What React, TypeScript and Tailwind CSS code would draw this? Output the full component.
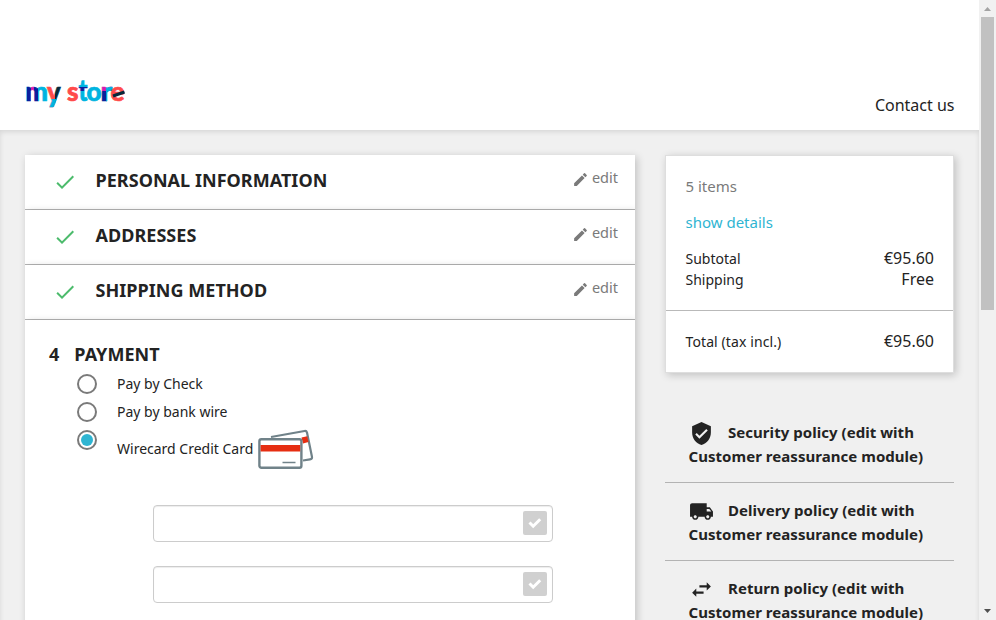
import React from "react";

function StoreLogo() {
  const letter = {
    fontFamily: "Lato, sans-serif",
    fontWeight: 900,
    fontSize: 27,
    strokeWidth: 0.7,
    lengthAdjust: "spacingAndGlyphs" as const,
  };
  return (
    <svg className="overflow-visible" width="102" height="46" viewBox="0 0 102 46" role="img" aria-label="my store">
      <defs>
        <linearGradient id="m" gradientUnits="userSpaceOnUse" x1="0" y1="0" x2="22" y2="0">
          <stop offset="0.1" stopColor="#00b4e0" />
          <stop offset="0.1" stopColor="#0a1f9c" />
          <stop offset="0.27" stopColor="#0a1f9c" />
          <stop offset="0.27" stopColor="#d41cb0" />
          <stop offset="0.42" stopColor="#d41cb0" />
          <stop offset="0.42" stopColor="#0a1f9c" />
          <stop offset="0.6" stopColor="#0a1f9c" />
          <stop offset="0.6" stopColor="#00b4e0" />
        </linearGradient>
        <linearGradient id="y" gradientUnits="userSpaceOnUse" x1="22" y1="0" x2="36" y2="0">
          <stop offset="0.58" stopColor="#ff4b4b" />
          <stop offset="0.58" stopColor="#06283a" />
        </linearGradient>
        <linearGradient id="yTail" gradientUnits="userSpaceOnUse" x1="0" y1="20" x2="0" y2="44">
          <stop offset="0.56" stopColor="#00b4e0" stopOpacity="0" />
          <stop offset="0.56" stopColor="#00b4e0" />
        </linearGradient>
        <linearGradient id="t" gradientUnits="userSpaceOnUse" x1="0" y1="14" x2="0" y2="36">
          <stop offset="0.33" stopColor="#00b4e0" />
          <stop offset="0.33" stopColor="#0a1f9c" />
          <stop offset="0.5" stopColor="#0a1f9c" />
          <stop offset="0.5" stopColor="#00b4e0" />
        </linearGradient>
        <linearGradient id="rStem" gradientUnits="userSpaceOnUse" x1="0" y1="20" x2="0" y2="36">
          <stop offset="0.33" stopColor="#d41cb0" />
          <stop offset="0.33" stopColor="#0a1f9c" />
        </linearGradient>
        <linearGradient id="rArm" gradientUnits="userSpaceOnUse" x1="76" y1="0" x2="87" y2="0">
          <stop offset="0.5" stopColor="#00b4e0" stopOpacity="0" />
          <stop offset="0.5" stopColor="#00b4e0" />
        </linearGradient>
      </defs>
      <text {...letter} x="0" y="34.5" textLength="23" fill="url(#m)" stroke="url(#m)">m</text>
      <text {...letter} x="22" y="36" fontSize={29} textLength="13.5" fill="url(#y)" stroke="url(#y)">y</text>
      <text {...letter} x="22" y="36" fontSize={29} textLength="13.5" fill="url(#yTail)" stroke="url(#yTail)" aria-hidden="true">y</text>
      <text {...letter} x="42" y="34.5" textLength="11.5" fill="#ff4b4b" stroke="#ff4b4b">s</text>
      <text {...letter} x="53.5" y="34.5" fontSize={30} textLength="9" fill="url(#t)" stroke="url(#t)">t</text>
      <text {...letter} x="61.5" y="34.5" textLength="15" fill="#00b4e0" stroke="#00b4e0">o</text>
      <text {...letter} x="75.5" y="34.5" textLength="11.5" fill="url(#rStem)" stroke="url(#rStem)">r</text>
      <text {...letter} x="75.5" y="34.5" textLength="11.5" fill="url(#rArm)" stroke="url(#rArm)" aria-hidden="true">r</text>
      <text {...letter} x="85.5" y="34.5" textLength="14" fill="#ff4b4b" stroke="#ff4b4b">e</text>
      <path d="M88 30 L99.5 26" stroke="#06283a" strokeWidth="3.2" />
    </svg>
  );
}

function StepRow({ title }: { title: string }) {
  return (
    <div className="flex h-[55px] border-b border-[#b3b3b3] bg-white pl-[28px] pr-[17px] shadow-[2px_2px_8px_rgba(0,0,0,0.2)]">
      <svg className="mt-[15px]" width="24" height="24" viewBox="0 0 24 24" fill="#4cbb6c">
        <path d="M9 16.17L4.83 12l-1.42 1.41L9 19 21 7l-1.41-1.41z" />
      </svg>
      <h2 className="ml-[18.5px] mt-[12px] text-[18px] leading-[26px] font-bold tracking-[0.04px]">{title}</h2>
      <span className="ml-auto mt-[10px] flex h-[24px] items-center text-[14.5px] leading-[24px] text-[#7a7a7a]">
        <svg className="mr-[3px] mt-[4px]" width="17" height="17" viewBox="0 0 24 24" fill="currentColor">
          <path d="M3 17.25V21h3.75L17.81 9.94l-3.75-3.75L3 17.25zM20.71 7.04a1 1 0 0 0 0-1.41l-2.34-2.34a1 1 0 0 0-1.41 0l-1.83 1.83 3.75 3.75 1.83-1.83z" />
        </svg>
        edit
      </span>
    </div>
  );
}

function Radio({ checked = false }: { checked?: boolean }) {
  return (
    <span className="flex size-5 shrink-0 items-center justify-center rounded-full border-2 border-[#7a7a7a] bg-white">
      {checked && <span className="size-3 rounded-full bg-[#2fb5d2]" />}
    </span>
  );
}

function CreditCards() {
  return (
    <svg className="ml-[5px]" width="56" height="40" viewBox="0 0 56 40" fill="none">
      <path d="M13 8 L46.5 2 Q48.5 1.7 49 3.5 L54 28 Q54.3 30 52 30.4 L45 31.5" stroke="#708289" strokeWidth="2.2" />
      <path d="M43.5 8.6 L49.2 7.2 50.5 13 45 14.5z" fill="#e62e12" />
      <rect x="1.4" y="10.2" width="42" height="28.6" rx="2" fill="white" stroke="#708289" strokeWidth="2.4" />
      <path d="M2.6 16h39.6v6.5H2.6z" fill="#e62e12" />
      <path d="M24.5 33.5h13" stroke="#708289" strokeWidth="1.5" />
    </svg>
  );
}

function CardField() {
  return (
    <div className="flex h-[37px] w-[400px] items-start justify-end rounded-[4px] border border-[#ccc] bg-white pr-[5px] pt-[5px] shadow-[inset_0_1px_1px_rgba(0,0,0,0.075)]">
      <span className="flex size-6 items-center justify-center rounded-[2px] bg-[#d0d0d0]">
        <svg width="14" height="12" viewBox="0 0 14 12" fill="none" stroke="white" strokeWidth="3">
          <path d="M1.5 5.5 L5.2 9.2 L12.2 2.3" />
        </svg>
      </span>
    </div>
  );
}

function Policy({ title, icon, last = false }: { title: string; icon: React.ReactNode; last?: boolean }) {
  return (
    <div className={last ? "h-[78px] pl-[23.5px] pt-[15px]" : "h-[78px] border-b border-[#b3b3b3] pl-[23.5px] pt-[15px]"}>
      <div className="flex h-6 items-center">
        <svg className="mr-[14.5px] mt-[2px] shrink-0" width="25" height="25" viewBox="0 0 24 24" fill="#232323">
          {icon}
        </svg>
        <span className="text-[15px] leading-6 font-bold whitespace-nowrap tracking-[0.04px]">{title} (edit with</span>
      </div>
      <div className="text-[15px] leading-6 font-bold whitespace-nowrap tracking-[0.04px]">Customer reassurance module)</div>
    </div>
  );
}

export default function App() {
  return (
    <div className="flex h-[620px] w-[996px] overflow-hidden bg-white font-['Noto_Sans',sans-serif] text-[#232323]">
      <div className="flex w-[979px] flex-col">
        <header className="flex h-[130px] shrink-0 justify-between pl-[25px] pr-[24.5px]">
          <div className="pt-[66px]">
            <StoreLogo />
          </div>
          <a className="pt-[93px] text-[16px] leading-6">Contact us</a>
        </header>
        <main className="h-[600px] shrink-0 bg-[#f0f0f0] pl-[25px] pt-[25px] shadow-[inset_0_2px_5px_0_rgba(0,0,0,0.11)]">
          <div className="flex items-start gap-[30px]">
            <section className="h-[560px] w-[610px] overflow-hidden bg-white shadow-[2px_2px_8px_0_rgba(0,0,0,0.2)]">
              <StepRow title="PERSONAL INFORMATION" />
              <StepRow title="ADDRESSES" />
              <StepRow title="SHIPPING METHOD" />
              <div className="h-[395px] bg-white pl-6 pt-[21px] shadow-[2px_2px_8px_0_rgba(0,0,0,0.2)]">
                <h2 className="flex gap-[15px] text-[18px] leading-[26px] font-bold tracking-[0.04px]">
                  <span>4</span>
                  <span>PAYMENT</span>
                </h2>
                <div className="flex flex-col pl-7 pt-[7px] text-[14px] leading-5">
                  <label className="flex h-7 items-start gap-5"><Radio />Pay by Check</label>
                  <label className="flex h-7 items-start gap-5"><Radio />Pay by bank wire</label>
                  <label className="flex h-[75px] items-start">
                    <Radio checked />
                    <span className="-mt-px ml-5 flex items-center">Wirecard Credit Card<CreditCards /></span>
                  </label>
                </div>
                <div className="flex flex-col gap-6 pl-[104px]">
                  <CardField />
                  <CardField />
                </div>
              </div>
            </section>
            <aside className="w-[289px]">
              <div className="h-[218px] border border-[#dedede] bg-white shadow-[2px_2px_8px_0_rgba(0,0,0,0.2)]">
                <div className="h-[155px] border-b border-[#b9b9b9] pl-[19.5px] pr-[19px] pt-[18px] text-[15px] leading-6">
                  <p className="text-[#7a7a7a]">5 items</p>
                  <p className="mt-3 text-[#2fb5d2]">show details</p>
                  <div className="mt-[14px] flex h-[21px] items-center justify-between">
                    <span className="text-[14px]">Subtotal</span><span className="-mt-0.5 text-[16px]">€95.60</span>
                  </div>
                  <div className="flex h-[21px] items-center justify-between">
                    <span className="text-[14px]">Shipping</span><span className="-mt-0.5 text-[16px]">Free</span>
                  </div>
                </div>
                <div className="flex h-[61px] items-center justify-between pl-[19.5px] pr-[19px]">
                  <span className="text-[14px] tracking-[0.1px]">Total (tax incl.)</span><span className="-mt-0.5 text-[16px]">€95.60</span>
                </div>
              </div>
              <div className="mt-8">
                <Policy
                  title="Security policy"
                  icon={<path d="M12 1L3 5v6c0 5.55 3.84 10.74 9 12 5.16-1.26 9-6.45 9-12V5l-9-4zm-2 16l-4-4 1.41-1.41L10 14.17l6.59-6.59L18 9l-8 8z" />}
                />
                <Policy
                  title="Delivery policy"
                  icon={<path d="M20 8h-3V4H3c-1.1 0-2 .9-2 2v11h2c0 1.66 1.34 3 3 3s3-1.34 3-3h6c0 1.66 1.34 3 3 3s3-1.34 3-3h2v-5l-3-4zM6 18.5c-.83 0-1.5-.67-1.5-1.5s.67-1.5 1.5-1.5 1.5.67 1.5 1.5-.67 1.5-1.5 1.5zm13.5-9l1.96 2.5H17V9.5h2.5zm-1.5 9c-.83 0-1.5-.67-1.5-1.5s.67-1.5 1.5-1.5 1.5.67 1.5 1.5-.67 1.5-1.5 1.5z" />}
                />
                <Policy
                  last
                  title="Return policy"
                  icon={<path d="M6.99 11L3 15l3.99 4v-3H14v-2H6.99v-3zM21 9l-3.99-4v3H10v2h7.01v3L21 9z" />}
                />
              </div>
            </aside>
          </div>
        </main>
      </div>
      <div className="flex w-[17px] flex-col items-center bg-[#f1f1f1]">
        <svg width="17" height="17" fill="#a3a3a3"><path d="M5 11h7L8.5 7z" /></svg>
        <div className="h-[293px] w-[13px] bg-[#c1c1c1]" />
        <svg className="mt-auto" width="17" height="17" fill="#505050"><path d="M5 6h7L8.5 10z" /></svg>
      </div>
    </div>
  );
}
